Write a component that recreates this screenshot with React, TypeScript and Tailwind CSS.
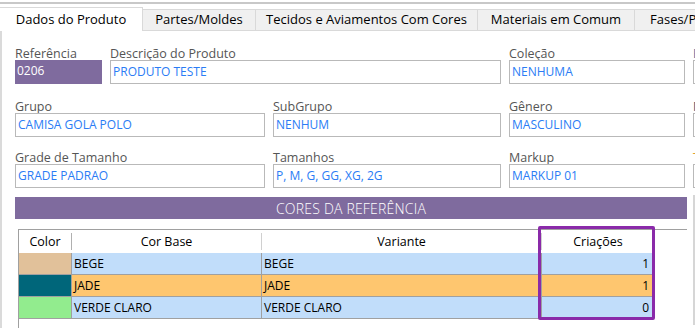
const font = "font-['Open_Sans','Noto_Sans',sans-serif]";

const tabs = [
  { label: "Dados do Produto", w: "w-[143px]", active: true },
  { label: "Partes/Moldes", w: "w-[113px]" },
  { label: "Tecidos e Aviamentos Com Cores", w: "w-[222px]" },
  { label: "Materiais em Comum", w: "w-[157px]" },
  { label: "Fases/Processos", w: "w-[120px]", left: true },
];

type FieldProps = {
  label: string;
  value?: string;
  w: string;
  labelColor?: string;
  purple?: boolean;
};

const Field = ({ label, value = "", w, labelColor = "text-[#555555]", purple }: FieldProps) => (
  <div className={`flex flex-col shrink-0 ${w}`}>
    <span className={`text-[12.5px] leading-[17px] h-[15px] whitespace-nowrap ${labelColor}`}>
      {label}
    </span>
    {purple ? (
      <div className="h-[24px] bg-[#7f6b9e] text-white text-[12px] leading-[22px] px-[2px] whitespace-nowrap">
        {value}
      </div>
    ) : (
      <div className="h-[24px] border border-[#b9b9b9] bg-white text-[#2a7cf5] text-[12px] leading-[21px] px-[2px] whitespace-nowrap overflow-hidden">
        {value}
      </div>
    )}
  </div>
);

const rows = [
  { swatch: "bg-[#e1c19a]", base: "BEGE", variante: "BEGE", qty: "1", bg: "bg-[#c1ddfa]" },
  { swatch: "bg-[#00667a]", base: "JADE", variante: "JADE", qty: "1", bg: "bg-[#fec66f]" },
  { swatch: "bg-[#92ec8e]", base: "VERDE CLARO", variante: "VERDE CLARO", qty: "0", bg: "bg-[#c1ddfa]" },
];

export default function App() {
  return (
    <div className={`relative w-[695px] h-[328px] overflow-hidden bg-white text-black ${font}`}>
      {/* window edge */}
      <div className="h-[2px] bg-white" />
      <div className="h-[2px] bg-[#c8c8c8]" />

      {/* tab strip */}
      <div className="flex items-end h-[27px] whitespace-nowrap">
        {tabs.map((t) =>
          t.active ? (
            <div
              key={t.label}
              className={`${t.w} shrink-0 h-[24px] bg-white border-t border-r border-[#d9d9d9] flex items-center justify-center text-[13px] text-black`}
            >
              {t.label}
            </div>
          ) : (
            <div
              key={t.label}
              className={`${t.w} shrink-0 h-[22px] bg-[#f0f0f0] border-t border-r border-b border-[#d9d9d9] flex items-center ${t.left ? "justify-start pl-[15px]" : "justify-center"} text-[13px] text-black`}
            >
              {t.label}
            </div>
          )
        )}
      </div>

      {/* content */}
      <div className="border-l-2 border-[#dadada] h-[297px] pl-[13px] pt-[14px]">
        <div className="flex gap-[8px]">
          <Field label="Referência" value="0206" w="w-[87px]" purple />
          <Field label="Descrição do Produto" value="PRODUTO TESTE" w="w-[391px]" />
          <Field label="Coleção" value="NENHUMA" w="w-[176px]" />
          <Field label="Estilista" w="w-[100px]" labelColor="text-[#3b6ea5]" />
        </div>

        <div className="flex gap-[8px] mt-[14px]">
          <Field label="Grupo" value="CAMISA GOLA POLO" w="w-[250px]" />
          <Field label="SubGrupo" value="NENHUM" w="w-[228px]" />
          <Field label="Gênero" value="MASCULINO" w="w-[176px]" />
          <Field label="Modelista" w="w-[100px]" labelColor="text-[#2f4f6f]" />
        </div>

        <div className="flex gap-[8px] mt-[12px]">
          <Field label="Grade de Tamanho" value="GRADE PADRAO" w="w-[250px]" />
          <Field label="Tamanhos" value="P, M, G, GG, XG, 2G" w="w-[228px]" />
          <Field label="Markup" value="MARKUP 01" w="w-[176px]" />
          <Field label="Tipo" w="w-[100px]" labelColor="text-[#e0a030]" />
        </div>

        <div className="flex gap-[6px] mt-[9px]">
          <div className="w-[672px] shrink-0">
            <div className="h-[22px] bg-[#7f6b9e] text-white text-[14px] font-light flex items-center justify-center tracking-[0.2px]">
              CORES DA REFERÊNCIA
            </div>

            {/* grid */}
            <div className="mt-[10px] ml-[3px] border-t border-l border-[#a0a0a0] h-[100px]">
              <div className="w-[635px] text-[12.5px]">
                <div className="flex h-[23px] bg-white items-center">
                  <div className="w-[53px] shrink-0 text-center border-r border-[#b0b0b0] h-[17px] leading-[17px]">Color</div>
                  <div className="w-[190px] shrink-0 text-center border-r border-[#d0d0d0] h-[17px] leading-[17px]">Cor Base</div>
                  <div className="w-[280px] shrink-0 text-center border-r border-[#d0d0d0] h-[17px] leading-[17px]">Variante</div>
                  <div className="w-[112px] shrink-0 text-center h-[17px] leading-[17px]">Criações</div>
                </div>
                {rows.map((r) => (
                  <div key={r.base} className={`flex h-[22px] border-b border-[#a0a0a0] ${r.bg}`}>
                    <div className={`w-[53px] shrink-0 border-r border-[#a0a0a0] ${r.swatch}`} />
                    <div className="w-[190px] shrink-0 border-r border-[#a0a0a0] px-[2px] leading-[21px] text-[12px]">{r.base}</div>
                    <div className="w-[280px] shrink-0 border-r border-[#a0a0a0] px-[2px] leading-[21px] text-[12px]">{r.variante}</div>
                    <div className="w-[112px] shrink-0 border-r border-[#a0a0a0] px-[4px] leading-[21px] text-[12px] text-right">{r.qty}</div>
                  </div>
                ))}
              </div>
            </div>
          </div>
          <div className="w-[100px] shrink-0 border-l-2 border-[#d6d6d6] h-[130px] mt-[-2px]" />
        </div>
      </div>

      {/* highlight around Criações column */}
      <div className="absolute left-[538px] top-[226px] w-[117px] h-[94px] border-[3px] border-[#8a2aa9] rounded-[2px]" />
    </div>
  );
}
